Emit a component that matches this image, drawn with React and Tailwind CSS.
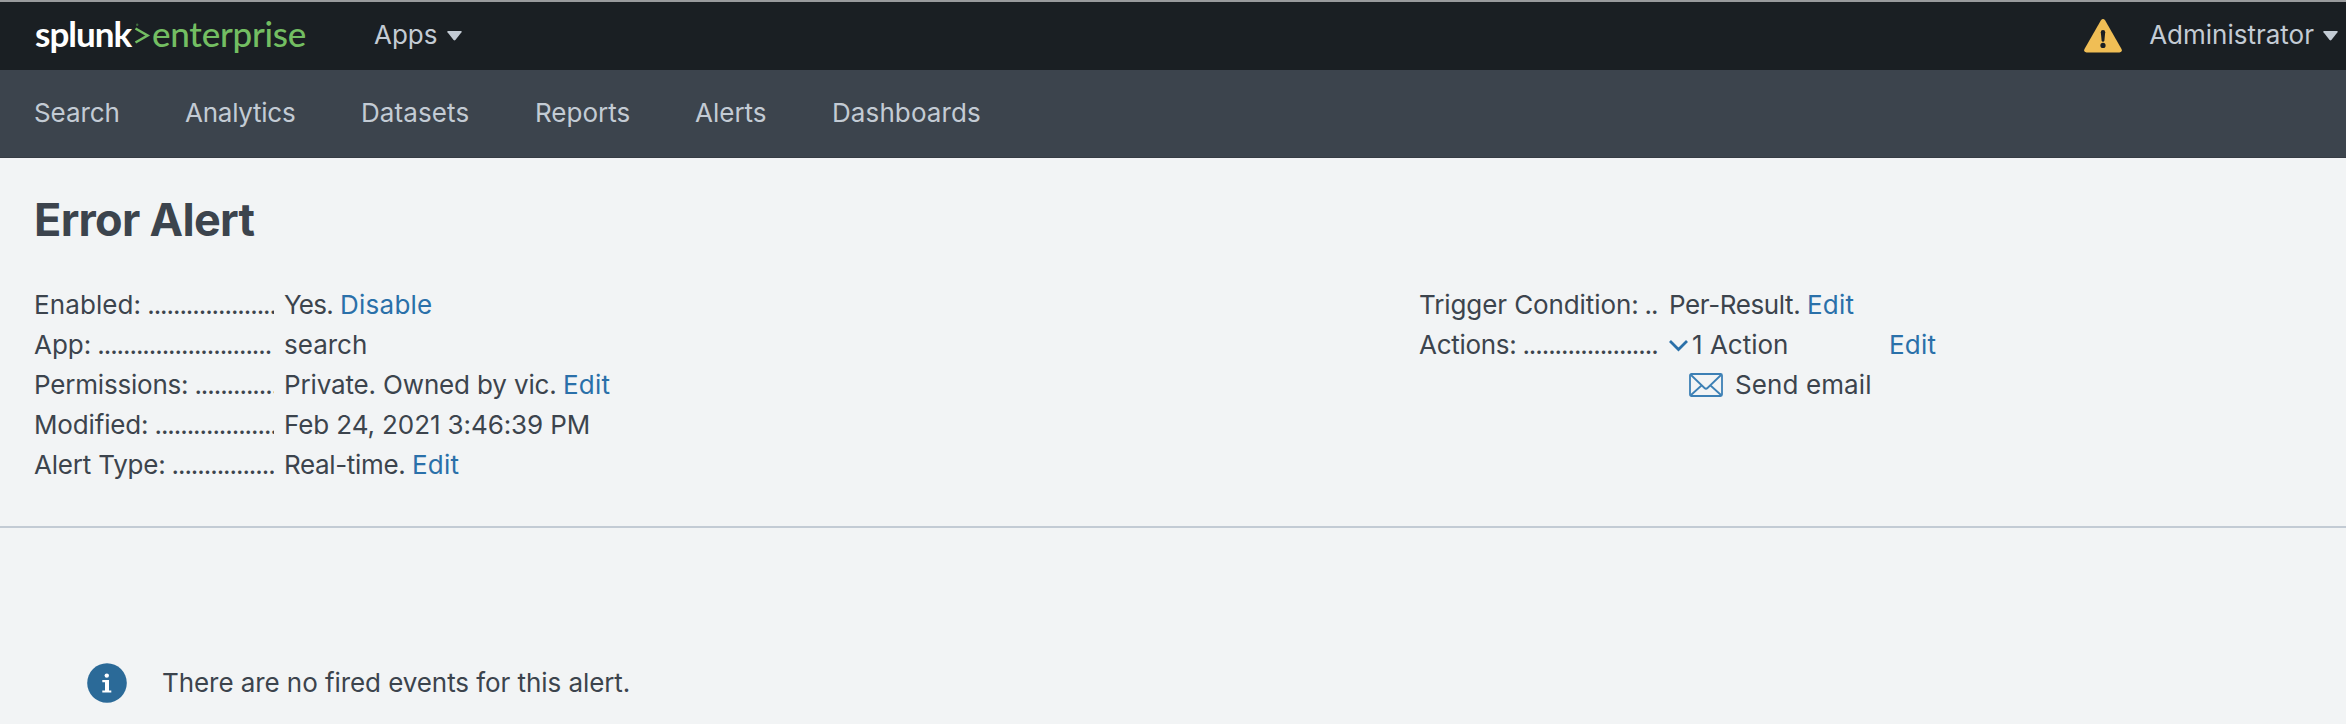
function Caret() {
  return (
    <svg className="h-[10px] w-[15px]" viewBox="0 0 15 10" fill="currentColor">
      <path d="M1 0H14Q15.2 .2 14.5 1.3L8.4 9Q7.5 9.8 6.6 9L.5 1.3Q-.2 .2 1 0Z" />
    </svg>
  );
}

function Logo() {
  return (
    <div className="-mt-[6px] flex h-[62px] w-[338px] items-center pl-[35px] font-['Lato',sans-serif] text-[35px] leading-[62px]">
      <span className="w-[99px] font-bold tracking-[-1px] text-white">splunk</span>
      <svg className="mt-[4px] h-[24px] w-[18px]" viewBox="0 0 18 24" fill="none">
        <path d="M1.5 5.5L13.5 12.5L1.5 19.5" stroke="#73be62" strokeWidth="2.6" />
        <circle cx="3.2" cy="1.8" r="1.2" fill="#3f6b3d" />
      </svg>
      <span className="font-medium tracking-[-0.25px] text-[#73be62]">enterprise</span>
    </div>
  );
}

function Row({ label, dots, track, children }) {
  return (
    <div className="flex h-[40px] gap-[10px]">
      <dt className="flex w-[240px] gap-[6px] whitespace-nowrap">
        <span className={track}>{label}</span>
        <span className="min-w-0 flex-1 overflow-hidden tracking-[-1.05px]">{'.'.repeat(dots)}</span>
      </dt>
      <dd className="flex whitespace-nowrap">{children}</dd>
    </div>
  );
}

function Link({ children, className = 'tracking-[0.2px]' }) {
  return <a href="#" className={`text-[#2a70a9] ${className}`}>{children}</a>;
}

export default function App() {
  return (
    <div className="h-[724px] w-[2346px] overflow-hidden bg-[#f2f4f5] font-['Inter',sans-serif] text-[26px] leading-[40px] text-[#3c444d]">
      <header className="flex h-[70px] items-center border-t-2 border-[#999b9d] bg-[#1a1f23] text-[#c3cbd4]">
        <Logo />
        <div className="flex items-center gap-[9px] pl-[36px]">
          <span className="-mt-[2px]">Apps</span>
          <Caret />
        </div>
        <div className="ml-auto flex items-center pr-[8px]">
          <svg className="mr-[27px] h-[34px] w-[38px]" viewBox="0 0 38 34">
            <path d="M16.8 1.4Q19-1.2 21.2 1.4L37.5 30Q38.8 33.2 35.5 33.4H2.5Q-.8 33.2 .5 30Z" fill="#f0be55" />
            <path d="M19 11Q21.3 11 21.2 13.3L20.4 21.5Q20.2 22.8 19 22.8Q17.8 22.8 17.6 21.5L16.8 13.3Q16.7 11 19 11Z" fill="#1a1f23" />
            <circle cx="19" cy="26.4" r="2.6" fill="#1a1f23" />
          </svg>
          <span className="-mt-[2px] mr-[9px]">Administrator</span>
          <Caret />
        </div>
      </header>

      <nav className="flex h-[88px] border-b border-[#363c44] bg-[#3c444d] pt-[23px] pl-[34px] text-[#c3cbd4]">
        <a href="#" className="w-[151px] tracking-[-0.1px]">Search</a>
        <a href="#" className="w-[176px] tracking-[-0.25px]">Analytics</a>
        <a href="#" className="w-[174px] tracking-[0.1px]">Datasets</a>
        <a href="#" className="w-[160px]">Reports</a>
        <a href="#" className="w-[137px]">Alerts</a>
        <a href="#" className="tracking-[0.1px]">Dashboards</a>
      </nav>

      <main>
        <section className="h-[370px] border-b-2 border-[#c3cbd4] pt-[32px] pl-[34px]">
          <h1 className="h-[95px] text-[45px] leading-[60px] font-bold tracking-[-0.7px]">Error Alert</h1>
          <div className="flex">
            <dl className="w-[1385px]">
              <Row label="Enabled:" dots={20} track="tracking-[0.1px]">
                <span className="w-[56px] tracking-[-0.8px]">Yes.</span>
                <Link className="tracking-[0.25px]">Disable</Link>
              </Row>
              <Row label="App:" dots={27}>search</Row>
              <Row label="Permissions:" dots={13} track="tracking-[-0.2px]">
                <span className="w-[279px] tracking-[-0.15px]">Private. Owned by vic.</span>
                <Link>Edit</Link>
              </Row>
              <Row label="Modified:" dots={19} track="tracking-[-0.15px]">
                <span className="tracking-[-0.1px]">Feb 24, 2021 3:46:39 PM</span>
              </Row>
              <Row label="Alert Type:" dots={16} track="tracking-[-0.2px]">
                <span className="w-[128px] tracking-[-0.35px]">Real-time.</span>
                <Link>Edit</Link>
              </Row>
            </dl>
            <dl>
              <Row label="Trigger Condition:" dots={2} track="tracking-[-0.1px]">
                <span className="w-[138px] tracking-[-0.4px]">Per-Result.</span>
                <Link>Edit</Link>
              </Row>
              <Row label="Actions:" dots={21} track="tracking-[-0.3px]">
                <svg className="mt-[14px] mr-[4px] h-[14px] w-[19px]" viewBox="0 0 19 14" fill="none">
                  <path d="M1 2L9.5 10.5L18 2" stroke="#2a70a9" strokeWidth="2.8" />
                </svg>
                <span className="w-[197px]">1 Action</span>
                <Link>Edit</Link>
              </Row>
              <div className="flex h-[40px] items-center pl-[270px]">
                <svg className="mr-[12px] h-[24px] w-[34px]" viewBox="0 0 34 24" fill="none" stroke="#3d80b5" strokeWidth="1.8">
                  <rect x="1" y="1" width="32" height="22" rx="1.5" />
                  <path d="M2 2L15.5 15Q17 16.4 18.5 15L32 2M2 22L12.5 12.5M32 22L21.5 12.5" />
                </svg>
                <span className="tracking-[0.1px]">Send email</span>
              </div>
            </dl>
          </div>
        </section>
        <section className="flex items-center pt-[135px] pl-[87px]">
          <svg className="mr-[35px] h-[40px] w-[40px]" viewBox="0 0 40 40">
            <circle cx="20" cy="20" r="19.8" fill="#2b6a98" />
            <circle cx="19.8" cy="12.6" r="2.2" fill="#fff" />
            <path d="M15.3 17H22V27.4H24.3V29.6H15.3V27.4H18V19.2H15.3Z" fill="#fff" />
          </svg>
          <p className="tracking-[-0.07px]">There are no fired events for this alert.</p>
        </section>
      </main>
    </div>
  );
}
